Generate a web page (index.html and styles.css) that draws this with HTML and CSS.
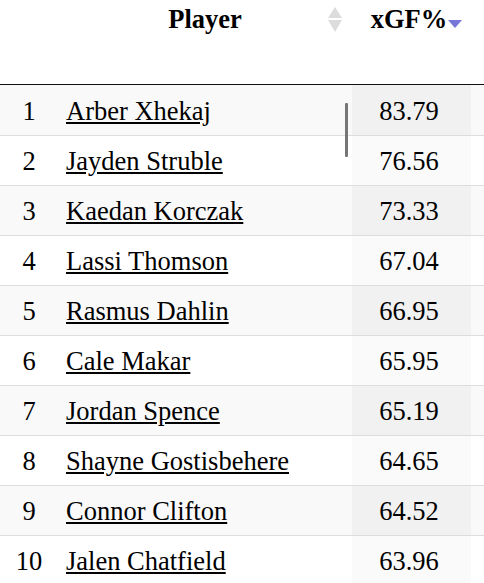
FILE: index.html
```html
<!DOCTYPE html>
<html>
<head>
<meta charset="utf-8">
<link rel="stylesheet" href="styles.css">
</head>
<body>
<div class="wrap">
<table class="stats">
  <colgroup>
    <col class="c-rank"><col class="c-name"><col class="c-xgf"><col class="c-more">
  </colgroup>
  <thead>
    <tr>
      <th class="h-rank"></th>
      <th class="h-name sortable">Player<span class="sort-both"><i class="up"></i><i class="down"></i></span></th>
      <th class="h-xgf sortable">xGF%<span class="sort-desc"></span></th>
      <th class="more"></th>
    </tr>
  </thead>
  <tbody>
    <tr class="odd"><td class="rank">1</td><td class="name"><a href="#">Arber Xhekaj</a></td><td class="xgf">83.79</td><td class="more"></td></tr>
    <tr class="even"><td class="rank">2</td><td class="name"><a href="#">Jayden Struble</a></td><td class="xgf">76.56</td><td class="more"></td></tr>
    <tr class="odd"><td class="rank">3</td><td class="name"><a href="#">Kaedan Korczak</a></td><td class="xgf">73.33</td><td class="more"></td></tr>
    <tr class="even"><td class="rank">4</td><td class="name"><a href="#">Lassi Thomson</a></td><td class="xgf">67.04</td><td class="more"></td></tr>
    <tr class="odd"><td class="rank">5</td><td class="name"><a href="#">Rasmus Dahlin</a></td><td class="xgf">66.95</td><td class="more"></td></tr>
    <tr class="even"><td class="rank">6</td><td class="name"><a href="#">Cale Makar</a></td><td class="xgf">65.95</td><td class="more"></td></tr>
    <tr class="odd"><td class="rank">7</td><td class="name"><a href="#">Jordan Spence</a></td><td class="xgf">65.19</td><td class="more"></td></tr>
    <tr class="even"><td class="rank">8</td><td class="name"><a href="#">Shayne Gostisbehere</a></td><td class="xgf">64.65</td><td class="more"></td></tr>
    <tr class="odd"><td class="rank">9</td><td class="name"><a href="#">Connor Clifton</a></td><td class="xgf">64.52</td><td class="more"></td></tr>
    <tr class="even"><td class="rank">10</td><td class="name"><a href="#">Jalen Chatfield</a></td><td class="xgf">63.96</td><td class="more"></td></tr>
  </tbody>
</table>
<div class="thumb"></div>
</div>
</body>
</html>
```
FILE: styles.css
```css
html, body {
  margin: 0;
  padding: 0;
  background: #fff;
  overflow: hidden;
}
body {
  font-family: "Liberation Serif", "Times New Roman", serif;
  font-size: 26.5px;
  color: #000;
}
.wrap {
  position: relative;
  width: 484px;
}
.stats {
  width: 484px;
  table-layout: fixed;
  border-collapse: separate;
  border-spacing: 0;
}
.c-rank { width: 58px; }
.c-name { width: 294px; }
.c-xgf { width: 119px; }
.c-more { width: 13px; }

.stats th {
  position: relative;
  font-weight: bold;
  line-height: 30px;
  padding: 4px 10px 50px 10px;
  text-align: center;
  vertical-align: top;
  border-bottom: 1px solid #111;
  white-space: nowrap;
}
.stats th.h-xgf {
  padding-right: 15px;
}
.sort-both {
  position: absolute;
  left: 270px;
  top: 7px;
  width: 15px;
  height: 25px;
}
.sort-both i {
  position: absolute;
  left: 0;
  width: 0;
  height: 0;
  border-left: 7.5px solid transparent;
  border-right: 7.5px solid transparent;
}
.sort-both .up {
  top: 0;
  border-bottom: 11px solid #dcdcdc;
}
.sort-both .down {
  top: 13px;
  border-top: 12px solid #dcdcdc;
}
.sort-desc {
  position: absolute;
  right: 9px;
  top: 20px;
  width: 0;
  height: 0;
  border-left: 7px solid transparent;
  border-right: 7px solid transparent;
  border-top: 8px solid #7777d9;
}

.stats td {
  line-height: 30px;
  padding: 9.5px 10px;
  border-top: 1px solid #ddd;
  white-space: nowrap;
}
.stats tbody tr:first-child td {
  border-top: none;
  padding-top: 10.5px;
}
.stats th.more,
.stats td.more {
  padding-left: 0;
  padding-right: 0;
}
.stats tr.odd td { background: #f9f9f9; }
.stats tr.even td { background: #fff; }
.stats tr.odd td.xgf { background: #f1f1f1; }
.stats tr.even td.xgf { background: #fafafa; }

.stats td.rank {
  text-align: center;
  padding-left: 0;
  padding-right: 0;
}
.stats td.name {
  padding-left: 8px;
  text-align: left;
}
.stats td.name a {
  color: #000;
  text-decoration: underline;
}
.stats td.xgf {
  text-align: center;
  padding-right: 15px;
}

.thumb {
  position: absolute;
  left: 345px;
  top: 103px;
  width: 3px;
  height: 54px;
  background: #777;
  border-radius: 1px;
}
```
